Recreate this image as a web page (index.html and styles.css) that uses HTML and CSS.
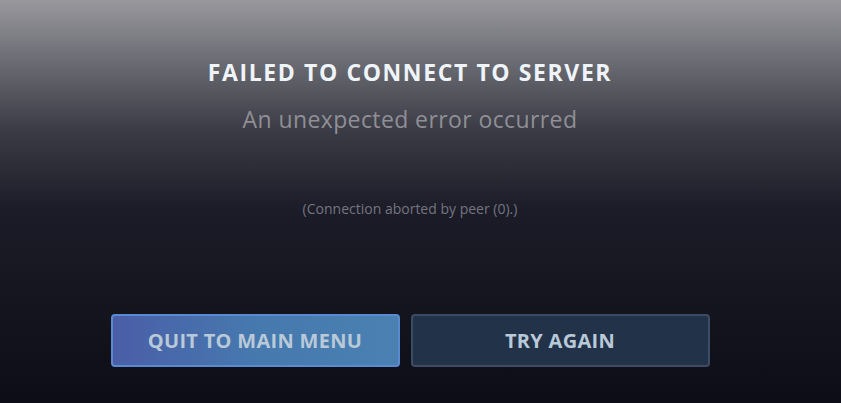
FILE: index.html
```html
<!DOCTYPE html>
<html lang="en">
<head>
    <meta charset="UTF-8">
    <meta name="viewport" content="width=device-width, initial-scale=1.0">
    <title>Connection Error</title>
    <link rel="stylesheet" href="styles.css">
</head>
<body>
    <div class="screen">
        <div class="message">
            <h1 class="title">FAILED TO CONNECT TO SERVER</h1>
            <p class="subtitle">An unexpected error occurred</p>
            <p class="detail">(Connection aborted by peer (0).)</p>
        </div>

        <div class="actions">
            <button class="btn btn-primary">QUIT TO MAIN MENU</button>
            <button class="btn btn-secondary">TRY AGAIN</button>
        </div>
    </div>
</body>
</html>
```

FILE: styles.css
```css
html, body {
    height: 100%;
}

body {
    margin: 0;
    font-family: "Open Sans", "Noto Sans", sans-serif;
    background: linear-gradient(to bottom, #98989d 0%, #6c6c74 15%, #3b3c46 32%, #1b1c27 52%, #14151f 75%, #0c0d16 100%);
    color: #eef3f7;
    overflow: hidden;
}

.screen {
    display: flex;
    flex-direction: column;
    align-items: center;
    padding: 58px 21px 0 0;
}

.message {
    display: flex;
    flex-direction: column;
    align-items: center;
}

.title {
    margin: 0;
    font-size: 23px;
    line-height: 28px;
    font-weight: 700;
    letter-spacing: 1.6px;
    color: #eef4f8;
}

.subtitle {
    margin: 18px 0 0;
    font-size: 23px;
    line-height: 30px;
    letter-spacing: 0.4px;
    color: #8f8f95;
}

.detail {
    margin: 66px 0 0;
    font-size: 14px;
    line-height: 18px;
    color: #747580;
}

.actions {
    display: flex;
    gap: 11px;
    margin-top: 96px;
}

.btn {
    height: 53px;
    border-radius: 4px;
    font-family: inherit;
    font-size: 20px;
    font-weight: 700;
    letter-spacing: 0.3px;
    color: #b9c9d8;
    cursor: pointer;
}

.btn-primary {
    width: 289px;
    background: linear-gradient(to right, #4a5ea8, #4679ae 50%, #4a80b2);
    border: 2px solid #5a8bd0;
}

.btn-secondary {
    width: 299px;
    background: #223349;
    border: 2px solid #3c4c65;
}

.btn:hover {
    opacity: 0.9;
}
```
